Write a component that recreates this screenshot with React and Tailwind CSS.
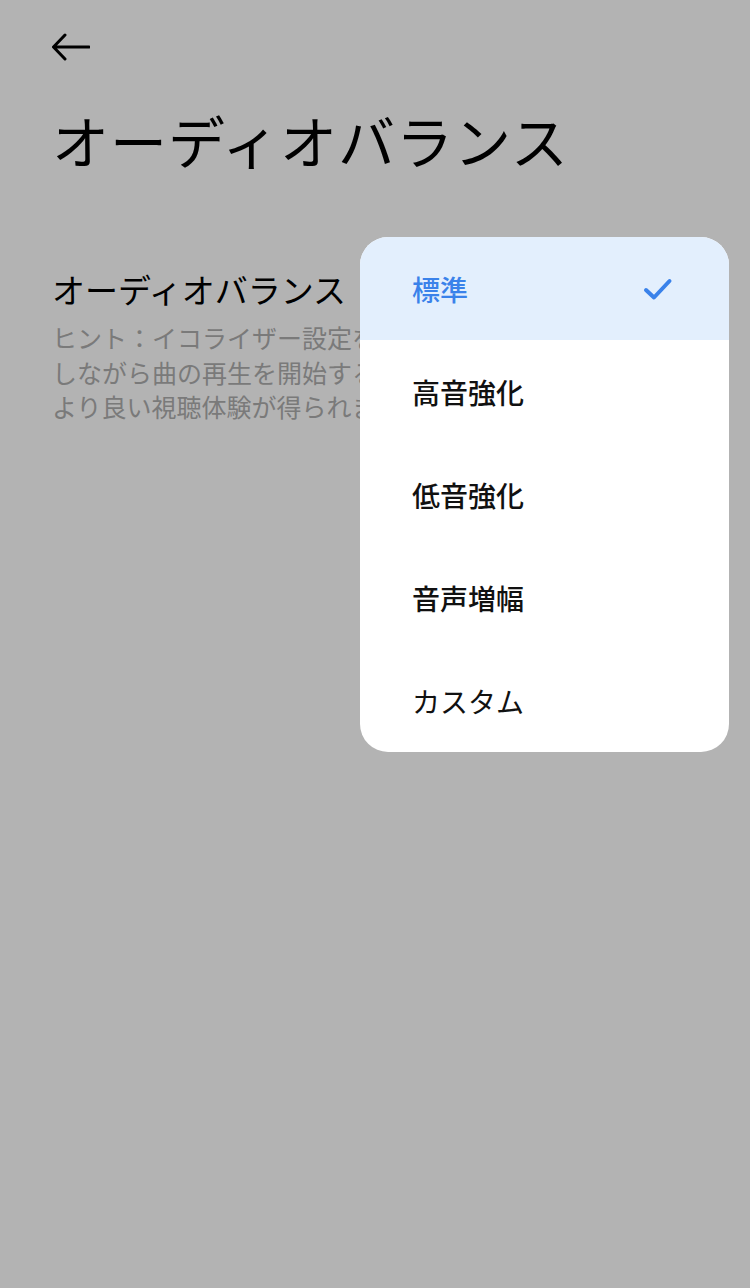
import React from 'react';

const options = ['標準', '高音強化', '低音強化', '音声増幅', 'カスタム'];

const App = () => {
  const selected = 0;

  return (
    <div
      className="relative w-[750px] h-[1288px] overflow-hidden bg-[#b3b3b3] text-black"
      style={{ fontFamily: '"Noto Sans CJK JP", "Noto Sans", sans-serif' }}
    >
      <div className="px-[52px] pt-[33px]">
        <button type="button" className="block w-[38px] h-[28px]">
          <svg width="38" height="28" viewBox="0 0 38 28" fill="none">
            <path
              d="M37 14H2M13 2L1.5 14L13 26"
              stroke="#000"
              strokeWidth="3"
              strokeLinecap="round"
              strokeLinejoin="round"
            />
          </svg>
        </button>
        <h1 className="mt-[38px] text-[57px] leading-[80px] font-normal tracking-[1px]">
          オーディオバランス
        </h1>
        <div className="mt-[88px]">
          <h2 className="text-[33px] leading-[44px] font-normal">オーディオバランス</h2>
          <p className="mt-[9px] text-[25px] leading-[34.5px] text-[#7a7a7a] whitespace-nowrap">
            <span className="block">ヒント：イコライザー設定を調整する際は、音楽を再生</span>
            <span className="block">しながら曲の再生を開始することで、</span>
            <span className="block">より良い視聴体験が得られます。</span>
          </p>
        </div>
      </div>

      <div className="absolute left-[360px] top-[237px] w-[369px] rounded-[28px] bg-white overflow-hidden">
        {options.map((label, i) => (
          <div
            key={label}
            className={
              i === selected
                ? 'flex items-center justify-between h-[103px] pl-[52px] pr-[56px] bg-[#e3effd]'
                : 'flex items-center justify-between h-[103px] pl-[52px] pr-[56px]'
            }
          >
            <span
              className={
                i === selected
                  ? 'text-[28px] font-medium text-[#3a82ea]'
                  : i === options.length - 1
                  ? 'text-[28px] font-normal text-[#111]'
                  : 'text-[28px] font-medium text-[#111]'
              }
            >
              {label}
            </span>
            {i === selected && (
              <svg width="30" height="24" viewBox="0 0 30 24" fill="none">
                <path
                  d="M3 13L11 20.5L26.5 4"
                  stroke="#3a82ea"
                  strokeWidth="4"
                  strokeLinecap="round"
                  strokeLinejoin="round"
                />
              </svg>
            )}
          </div>
        ))}
      </div>
    </div>
  );
};

export default App;
